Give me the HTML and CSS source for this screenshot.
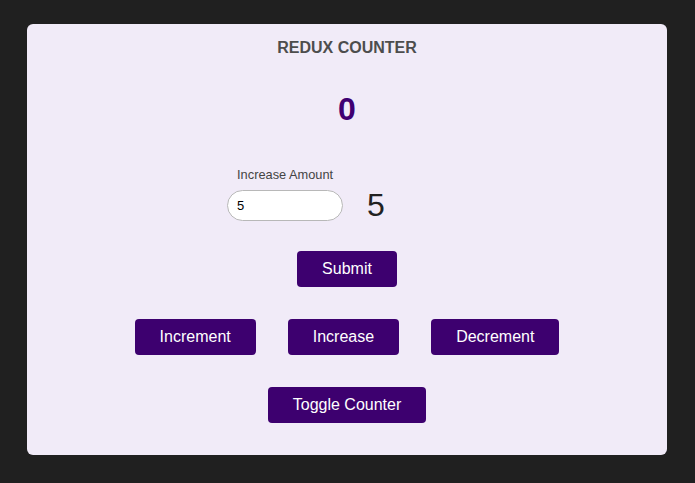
FILE: index.html
```html
<!DOCTYPE html>
<html lang="en">
<head>
<meta charset="utf-8">
<title>Redux Counter</title>
<link rel="stylesheet" href="styles.css">
</head>
<body>
<main class="counter">
  <h1 class="title">REDUX COUNTER</h1>
  <div class="value">0</div>
  <div class="amount">
    <div class="amount-grid">
      <label class="amount-label" for="amt">Increase Amount</label>
      <input id="amt" class="amount-input" type="text" value="5">
      <span class="amount-value">5</span>
    </div>
  </div>
  <div class="row">
    <button class="btn">Submit</button>
  </div>
  <div class="row row-gap">
    <button class="btn">Increment</button>
    <button class="btn">Increase</button>
    <button class="btn">Decrement</button>
  </div>
  <div class="row">
    <button class="btn">Toggle Counter</button>
  </div>
</main>
</body>
</html>
```
FILE: styles.css
```css
html, body {
  margin: 0;
  padding: 0;
  background: #202020;
  font-family: "Liberation Sans", Arial, Helvetica, sans-serif;
}
body {
  padding-top: 24px;
  padding-right: 1px;
}
.counter {
  width: 640px;
  margin: 0 auto;
  box-sizing: border-box;
  background: #f1ebf8;
  border-radius: 6px;
  padding: 14px 0 32px;
  display: flex;
  flex-direction: column;
  align-items: stretch;
}
.title {
  margin: 0;
  font-size: 16px;
  line-height: 20px;
  font-weight: bold;
  color: #4d4d4d;
  text-align: center;
}
.value {
  margin-top: 31px;
  font-size: 32px;
  line-height: 40px;
  font-weight: bold;
  color: #3f0072;
  text-align: center;
}
.amount {
  margin-top: 38px;
  display: flex;
  justify-content: center;
  padding-right: 82px;
}
.amount-grid {
  display: grid;
  grid-template-columns: 116px auto;
  column-gap: 24px;
  row-gap: 7px;
  align-items: center;
}
.amount-label {
  grid-column: 1;
  grid-row: 1;
  font-size: 12.8px;
  line-height: 16px;
  color: #444;
  text-align: center;
}
.amount-input {
  grid-column: 1;
  grid-row: 2;
  box-sizing: border-box;
  width: 116px;
  height: 31px;
  border: 1px solid #b8b8b8;
  border-radius: 16px;
  background: #fff;
  padding: 0 9px;
  font-family: "Liberation Sans", Arial, sans-serif;
  font-size: 13px;
  color: #000;
  outline: none;
}
.amount-value {
  grid-column: 2;
  grid-row: 2;
  font-size: 32px;
  line-height: 31px;
  color: #222;
}
.row {
  margin-top: 30px;
  display: flex;
  justify-content: center;
  gap: 32px;
}
.row + .row {
  margin-top: 32px;
}
.btn {
  height: 36px;
  padding: 0 25px;
  border: none;
  border-radius: 4px;
  background: #3d006f;
  color: #fff;
  font-family: "Liberation Sans", Arial, sans-serif;
  font-size: 16px;
  line-height: 36px;
  cursor: pointer;
}
```
